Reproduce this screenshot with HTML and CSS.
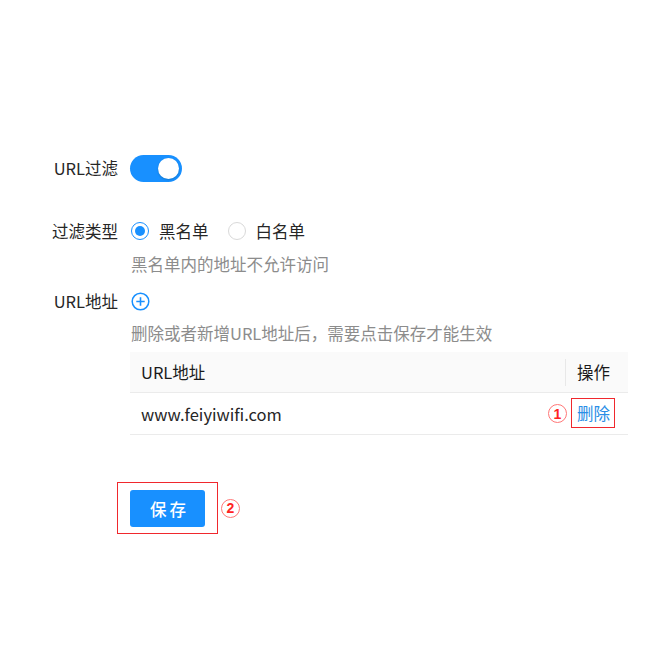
FILE: index.html
```html
<!DOCTYPE html>
<html lang="zh-CN">
<head>
<meta charset="utf-8">
<link rel="stylesheet" href="styles.css">
</head>
<body>
<div class="form">
  <div class="item item-switch">
    <div class="label">URL过滤</div>
    <div class="control">
      <span class="switch"><span class="knob"></span></span>
    </div>
  </div>
  <div class="item item-type">
    <div class="label">过滤类型</div>
    <div class="control">
      <div class="radios">
        <span class="radio checked"><span class="dot"></span></span><span class="radio-text">黑名单</span>
        <span class="radio"></span><span class="radio-text">白名单</span>
      </div>
      <div class="help help1">黑名单内的地址不允许访问</div>
    </div>
  </div>
  <div class="item item-url">
    <div class="label">URL地址</div>
    <div class="control">
      <div class="add-row">
        <svg class="plus" width="19" height="19" viewBox="0 0 19 19"><circle cx="9.5" cy="9.5" r="8.3" fill="none" stroke="#1890ff" stroke-width="1.5"/><path d="M9.5 5.3v8.4M5.3 9.5h8.4" stroke="#1890ff" stroke-width="1.6" fill="none"/></svg>
      </div>
      <div class="help help2">删除或者新增URL地址后，需要点击保存才能生效</div>
      <div class="table">
        <div class="thead">
          <div class="cell c-url">URL地址</div>
          <div class="cell c-op"><span class="sep"></span>操作</div>
        </div>
        <div class="trow">
          <div class="cell c-url">www.feiyiwifi.com</div>
          <div class="cell c-op"><span class="mark mark1">1</span><span class="del">删除</span></div>
        </div>
      </div>
    </div>
  </div>
  <div class="item item-save">
    <div class="label"></div>
    <div class="control">
      <div class="save-wrap">
        <div class="save-box"><button class="btn">保存</button></div>
        <span class="mark mark2">2</span>
      </div>
    </div>
  </div>
</div>
</body>
</html>
```
FILE: styles.css
```css
html, body {
  margin: 0;
  padding: 0;
  background: #fff;
}
body {
  font-family: "Noto Sans CJK SC", "Noto Sans", sans-serif;
  font-size: 16.5px;
  color: #262626;
}
.form {
  padding-top: 155px;
  padding-left: 40px;
}
.item {
  display: flex;
  align-items: flex-start;
}
.label {
  width: 78px;
  text-align: right;
  margin-right: 12px;
  line-height: 24px;
  flex: none;
}
.control {
  flex: none;
  width: 498px;
}
.item-switch .label {
  line-height: 27px;
}
.switch {
  display: block;
  width: 52px;
  height: 27px;
  border-radius: 14px;
  background: #1890ff;
  position: relative;
}
.knob {
  position: absolute;
  right: 3px;
  top: 3px;
  width: 21px;
  height: 21px;
  border-radius: 50%;
  background: #fff;
  box-shadow: 0 1px 2px rgba(0, 35, 11, 0.2);
}
.item-type {
  margin-top: 37px;
}
.radios {
  display: flex;
  align-items: center;
  height: 24px;
}
.radio {
  width: 18px;
  height: 18px;
  box-sizing: border-box;
  border: 1px solid #d9d9d9;
  border-radius: 50%;
  display: flex;
  align-items: center;
  justify-content: center;
  margin-left: 1px;
}
.radio.checked {
  border-color: #1890ff;
}
.dot {
  width: 10px;
  height: 10px;
  border-radius: 50%;
  background: #1890ff;
}
.radio-text {
  margin-left: 10px;
  margin-right: 18px;
}
.help {
  color: #8c8c8c;
  line-height: 24px;
  margin-left: 1px;
}
.help1 {
  margin-top: 9px;
}
.item-url {
  margin-top: 13px;
}
.add-row {
  height: 24px;
  display: flex;
  align-items: center;
}
.plus {
  display: block;
  margin-left: 1px;
}
.help2 {
  margin-top: 8px;
}
.table {
  margin-top: 7px;
  width: 498px;
}
.thead, .trow {
  display: flex;
  border-bottom: 1px solid #ebebeb;
}
.thead {
  background: #fafafa;
  height: 40px;
  color: #1a1a1a;
}
.trow {
  height: 41px;
}
.cell {
  display: flex;
  align-items: center;
}
.c-url {
  flex: 1;
  padding-left: 11px;
}
.c-op {
  width: 63px;
  flex: none;
  padding-left: 12px;
  box-sizing: border-box;
  position: relative;
}
.sep {
  position: absolute;
  left: 0;
  top: 7px;
  height: 27px;
  width: 1px;
  background: #e8e8e8;
}
.del {
  color: #2a8ee6;
  border: 1px solid #f0282d;
  padding: 3px 4px 2px 5px;
  margin-left: -6px;
  margin-top: -2px;
  line-height: 23px;
}
.mark {
  display: flex;
  align-items: center;
  justify-content: center;
  width: 19px;
  height: 19px;
  box-sizing: border-box;
  border: 1.5px solid #f77;
  border-radius: 50%;
  color: #f22;
  font-family: "Liberation Sans", sans-serif;
  font-weight: bold;
  font-size: 14px;
  line-height: 1;
}
.mark1 {
  position: absolute;
  left: -17px;
  top: 11px;
}
.item-save {
  margin-top: 47px;
}
.save-wrap {
  display: flex;
  align-items: center;
  margin-left: -13px;
}
.save-box {
  border: 1px solid #f0282d;
  padding: 7px 12px 6px 12px;
}
.btn {
  display: block;
  width: 75px;
  height: 37px;
  border: none;
  border-radius: 3px;
  background: #1890ff;
  color: #fff;
  font-family: "Noto Sans CJK SC", sans-serif;
  font-size: 16.5px;
  font-weight: 500;
  letter-spacing: 3px;
  text-indent: 4px;
  padding: 0;
}
.mark2 {
  margin-left: 3px;
}
```
